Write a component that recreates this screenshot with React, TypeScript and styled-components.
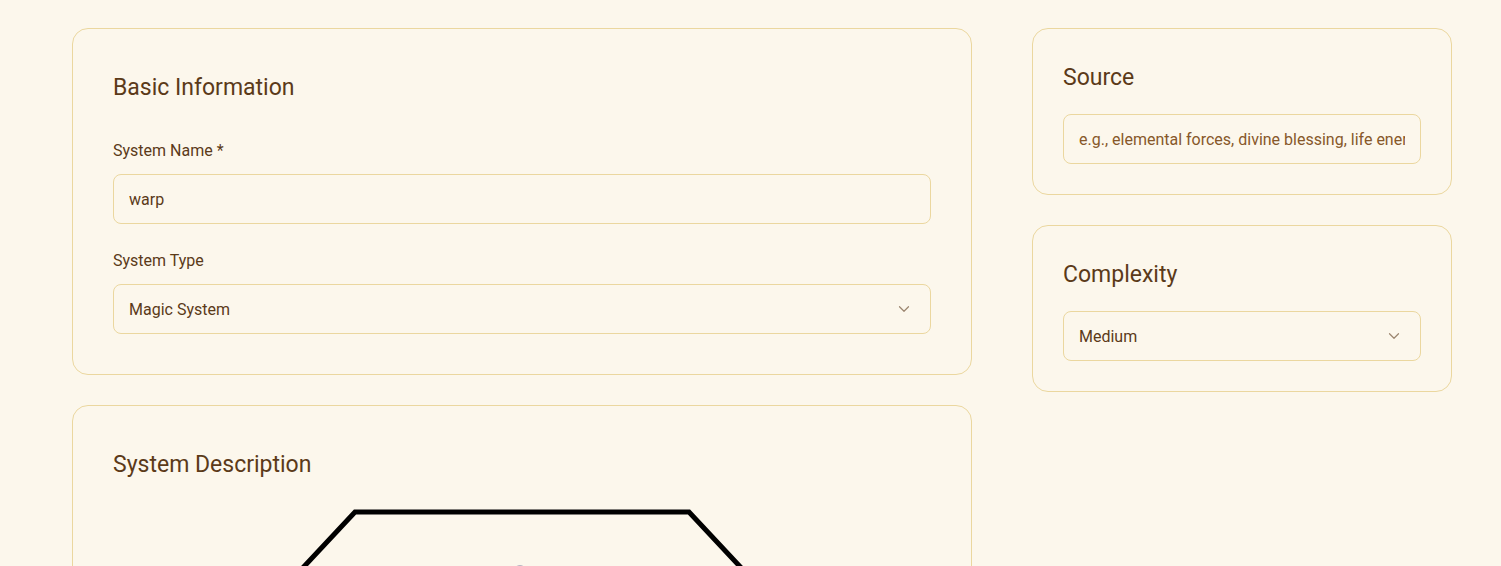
import React from "react";
import styled, { createGlobalStyle } from "styled-components";

const Global = createGlobalStyle`
  html, body { margin: 0; padding: 0; background: #fcf7ec; overflow: hidden; }
  body { font-family: Roboto, "Noto Sans", sans-serif; color: #5b3a19; }
  * { box-sizing: border-box; }
`;

const Page = styled.div`
  display: grid;
  grid-template-columns: 900px 420px;
  column-gap: 60px;
  align-items: start;
  padding: 28px 0 0 72px;
  height: 566px;
`;

const Column = styled.div<{ $gap: number }>`
  display: flex;
  flex-direction: column;
  gap: ${(p) => p.$gap}px;
`;

const Card = styled.section<{ $pad: number }>`
  border: 1px solid #ebd79f;
  border-radius: 16px;
  background: #fcf7ec;
  padding: ${(p) => p.$pad}px;
  display: flex;
  flex-direction: column;
`;

const Heading = styled.h2<{ $mb: number }>`
  margin: 0 0 ${(p) => p.$mb}px;
  font-size: 23px;
  line-height: 38px;
  font-weight: 400;
  color: #5b3a19;
`;

const Field = styled.div`
  display: flex;
  flex-direction: column;
  gap: 13px;
  & + & { margin-top: 27px; }
`;

const Label = styled.label`
  font-size: 16px;
  line-height: 20px;
  color: #5b3a19;
`;

const Input = styled.input`
  height: 50px;
  width: 100%;
  border: 1px solid #ebd79f;
  border-radius: 8px;
  background: #fcf7ec;
  padding: 0 15px;
  font: inherit;
  font-size: 16px;
  color: #5b3a19;
  outline: none;
  &::placeholder { color: #87582a; opacity: 1; }
`;

const SelectBox = styled.div`
  height: 50px;
  border: 1px solid #ebd79f;
  border-radius: 8px;
  background: #fcf7ec;
  padding: 0 17px 0 15px;
  display: flex;
  align-items: center;
  justify-content: space-between;
  font-size: 16px;
  color: #5b3a19;
`;

const Chevron = () => (
  <svg width="18" height="18" viewBox="0 0 24 24" fill="none" stroke="#9c8670" strokeWidth="1.6" strokeLinecap="round" strokeLinejoin="round">
    <path d="m6 9 6 6 6-6" />
  </svg>
);

const Select = ({ value }: { value: string }) => (
  <SelectBox>
    <span>{value}</span>
    <Chevron />
  </SelectBox>
);

const Illustration = styled.div`
  display: flex;
  justify-content: center;
  margin-top: 25px;
`;

export default function App() {
  return (
    <>
      <Global />
      <Page>
        <Column $gap={30}>
          <Card $pad={40}>
            <Heading $mb={34}>Basic Information</Heading>
            <Field>
              <Label>System Name *</Label>
              <Input defaultValue="warp" />
            </Field>
            <Field>
              <Label>System Type</Label>
              <Select value="Magic System" />
            </Field>
          </Card>
          <Card $pad={40}>
            <Heading $mb={0}>System Description</Heading>
            <Illustration>
              <svg width="534" height="120" viewBox="0 0 534 120" fill="none">
                <polyline points="0,110 100,3 434,3 534,110" stroke="#000" strokeWidth="5" strokeLinejoin="miter" />
                <circle cx="265" cy="62" r="6" fill="#b9b6c2" />
              </svg>
            </Illustration>
          </Card>
        </Column>
        <Column $gap={30}>
          <Card $pad={30}>
            <Heading $mb={17}>Source</Heading>
            <Input placeholder="e.g., elemental forces, divine blessing, life energy" />
          </Card>
          <Card $pad={30}>
            <Heading $mb={17}>Complexity</Heading>
            <Select value="Medium" />
          </Card>
        </Column>
      </Page>
    </>
  );
}
